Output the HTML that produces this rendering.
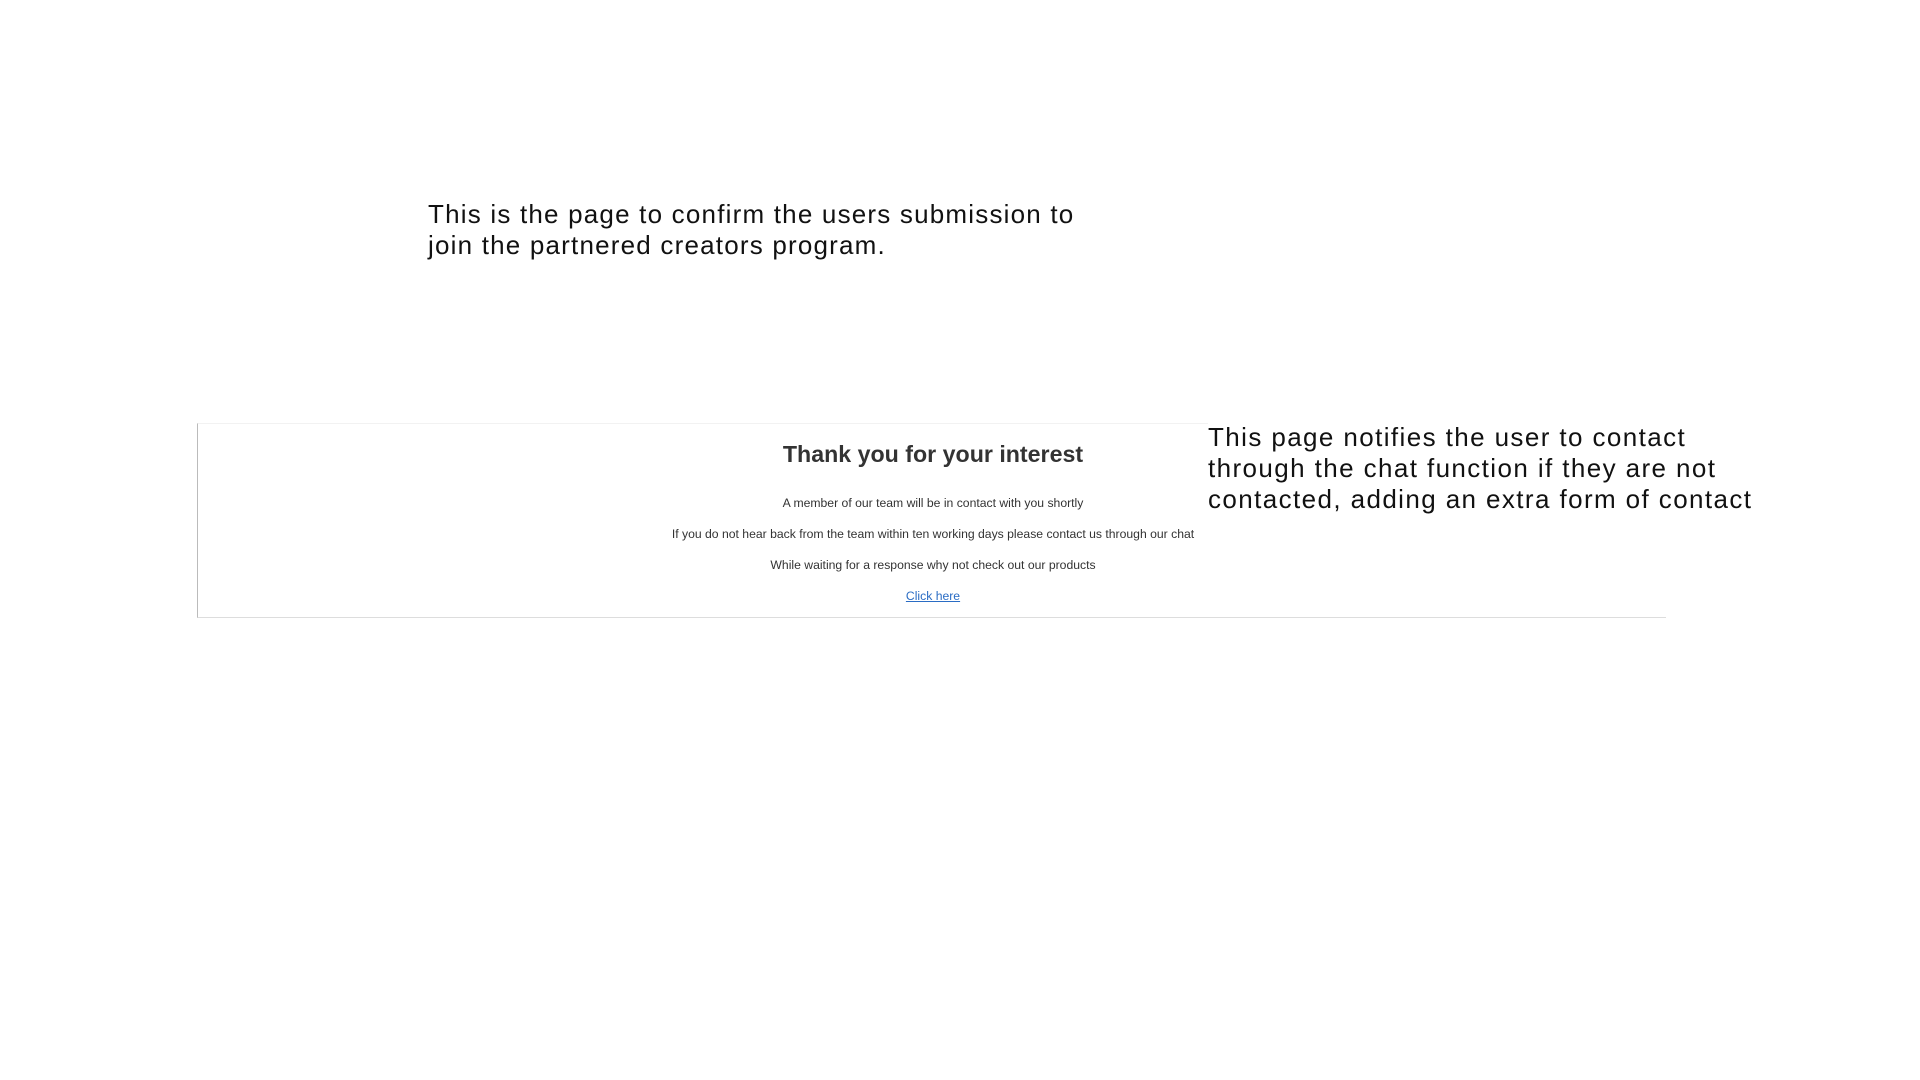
<!DOCTYPE html>
<html><head><meta charset="utf-8"><style>
body{margin:0;width:1920px;height:1080px;background:#fff;position:relative;overflow:hidden;font-family:"Liberation Sans",sans-serif}
.note{position:absolute;color:#111;font-size:26px;line-height:31px}
.box{position:absolute;left:197px;top:423px;height:195px;border-left:1px solid #bbb;border-bottom:1px solid #ddd;border-top:1px solid #f2f2f2;box-sizing:border-box;width:1469px}
.c{position:absolute;left:0;width:1866px;text-align:center;color:#333;font-size:12.2px}
</style></head><body>
<div class="note" style="left:428px;top:199px;letter-spacing:1.2px">This is the page to confirm the users submission to<br>join the partnered creators program.</div>
<div class="box"></div>
<div class="c" style="top:441px;font-size:23.2px;font-weight:bold;color:#333">Thank you for your interest</div>
<div class="c" style="top:496px">A member of our team will be in contact with you shortly</div>
<div class="c" style="top:527px">If you do not hear back from the team within ten working days please contact us through our chat</div>
<div class="c" style="top:558px">While waiting for a response why not check out our products</div>
<div class="c" style="top:589px;color:#2a6cc4;text-decoration:underline">Click here</div>
<div class="note" style="left:1208px;top:422px;background:#fff;letter-spacing:1.4px">This page notifies the user to contact<br>through the chat function if they are not<br>contacted, adding an extra form of contact</div>
</body></html>
